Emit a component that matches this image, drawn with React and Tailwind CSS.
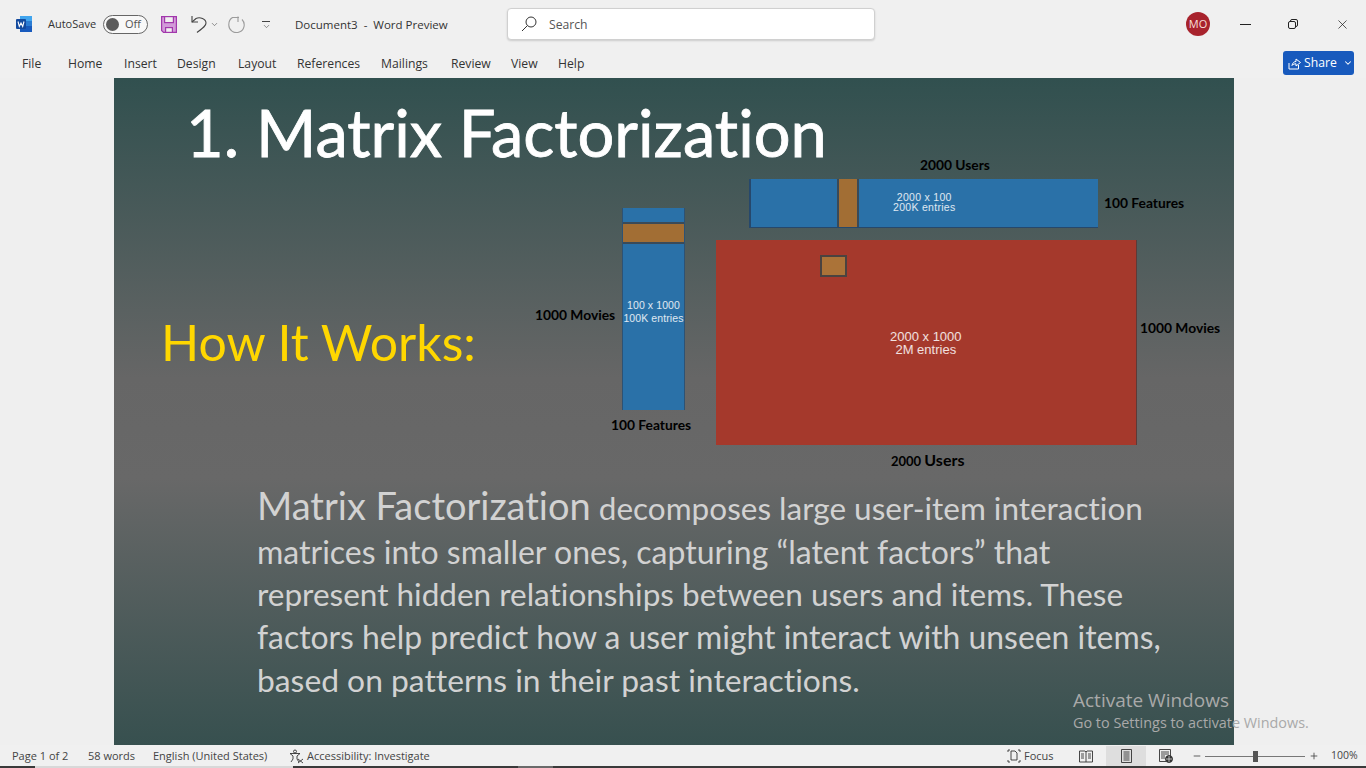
import React from 'react';
import { Minus, Plus, X, ChevronDown } from 'lucide-react';

const tabs = [
  ['File', 'w-[68px] pl-[22px]'],
  ['Home', 'w-[56px]'],
  ['Insert', 'w-[53px]'],
  ['Design', 'w-[61px]'],
  ['Layout', 'w-[59px]'],
  ['References', 'w-[84px]'],
  ['Mailings', 'w-[70px]'],
  ['Review', 'w-[60px]'],
  ['View', 'w-[47px]'],
  ['Help', 'w-[40px]'],
];

function WordLogo() {
  return (
    <svg width="16" height="16" viewBox="0 0 16 16" className="shrink-0">
      <rect x="4" y="0" width="12" height="16" rx="1" fill="#2b7cd3" />
      <rect x="4" y="0" width="12" height="5" fill="#41a5ee" />
      <rect x="4" y="10" width="12" height="6" fill="#185abd" />
      <rect x="0" y="3" width="10" height="10" rx="1" fill="#134a9e" />
      <path d="M2 5.5 L3.3 10.5 L5 7 L6.7 10.5 L8 5.5" fill="none" stroke="#fff" strokeWidth="1.1" />
    </svg>
  );
}

function SaveIcon() {
  return (
    <svg width="16" height="17" viewBox="0 0 16 17" className="shrink-0">
      <path d="M.6.6 H15.4 V16.4 H2.5 L.6 14.5 Z" fill="#d29bd9" stroke="#a238ac" strokeWidth="1.2" />
      <rect x="3.6" y=".6" width="8.8" height="6" fill="#f0f0f0" stroke="#a238ac" strokeWidth="1.2" />
      <rect x="4.6" y="11.6" width="6.8" height="4.8" fill="#f0f0f0" stroke="#a238ac" strokeWidth="1.2" />
    </svg>
  );
}

function UndoIcon() {
  return (
    <svg width="16" height="18" viewBox="0 0 16 18" fill="none" stroke="#444" strokeWidth="1.1" className="shrink-0">
      <path d="M1 1 V7 H7" />
      <path d="M1 7 L5 3.5 C9 1.5 15 4 15 8 C15 11 12 13 6 17.5" />
    </svg>
  );
}

function RedoIcon() {
  return (
    <svg width="17" height="17" viewBox="0 0 17 17" fill="none" stroke="#9c9c9c" strokeWidth="1.1" className="shrink-0">
      <path d="M11 1.5 H4.5 C2 3 .8 5.5 .8 8.5 A7.7 7.7 0 1 0 14 3.5" />
      <path d="M10 .5 V6" />
    </svg>
  );
}

function Diagram() {
  return (
    <div className="relative w-[710px] h-[312px] font-['Lato',sans-serif] font-bold text-black text-[13.8px] whitespace-nowrap">
      <span className="absolute left-[410px] -top-px leading-[16px]">2000 Users</span>
      <div className="absolute left-[239px] top-[21px] w-[349px] h-[49px] bg-[#2a71a8] border-l-2 border-b border-[#26486c]">
        <div className="absolute left-[86px] top-0 w-[22px] h-full bg-[#a26e34] border-x-2 border-[#3a4a58]" />
        <div className="absolute left-[142px] top-[13px] text-white/85 font-['Liberation_Sans',sans-serif] font-normal text-[10.5px] tracking-[0.3px] leading-[10px] text-center">2000 x 100<br />200K entries</div>
      </div>
      <span className="absolute left-[594px] top-[37px] leading-[16px]">100 Features</span>
      <div className="absolute left-[112px] top-[50px] w-[63px] h-[202px] bg-[#2a71a8] border-x border-[#2d5274]">
        <div className="absolute left-0 top-[14px] w-full h-[22px] bg-[#a26e34] border-y-2 border-[#3a4a58]" />
        <div className="absolute inset-x-0 top-[91px] text-white/85 font-['Liberation_Sans',sans-serif] font-normal text-[10.5px] tracking-[0.1px] leading-[13px] text-center">100 x 1000<br />100K entries</div>
      </div>
      <span className="absolute left-[25px] top-[149px] leading-[16px]">1000 Movies</span>
      <span className="absolute left-[101px] top-[259px] leading-[16px]">100 Features</span>
      <div className="absolute left-[206px] top-[82px] w-[421px] h-[205px] bg-[#a5392c] border-r border-[#5c3a38]">
        <div className="absolute left-[104px] top-[15px] w-[27px] h-[22px] bg-[#ab7338] border-2 border-[#4a4340]" />
        <div className="absolute left-[174px] top-[90px] text-white/85 font-['Liberation_Sans',sans-serif] font-normal text-[13px] leading-[13px] text-center">2000 x 1000<br />2M entries</div>
      </div>
      <span className="absolute left-[630px] top-[162px] leading-[16px]">1000 Movies</span>
      <span className="absolute left-[381px] top-[293px] leading-[18px] text-[13px]">2000 <span className="text-[16px]">Users</span></span>
    </div>
  );
}

export default function App() {
  return (
    <div className="w-[1366px] h-[768px] overflow-hidden flex flex-col bg-[#f0f0f0] font-['Open_Sans',sans-serif] text-[#333]">
      {/* title bar */}
      <div className="h-[48px] flex items-center shrink-0 text-[11.5px]">
        <div className="ml-[16px]"><WordLogo /></div>
        <span className="ml-[16px] w-[55px] text-[11px] text-[#333]">AutoSave</span>
        <div className="w-[45px] h-[19px] rounded-full border border-[#666] bg-[#f8f8f8] flex items-center pl-[2px] gap-[6px]">
          <div className="w-[13px] h-[13px] rounded-full bg-[#5c5c5c]" />
          <span className="text-[11px] text-[#555]">Off</span>
        </div>
        <div className="ml-[13px]"><SaveIcon /></div>
        <div className="ml-[14px]"><UndoIcon /></div>
        <ChevronDown size={9} strokeWidth={1.5} className="ml-[3px] text-[#444]" />
        <div className="ml-[9px]"><RedoIcon /></div>
        <div className="ml-[16px] w-[10px] mt-[3px] flex flex-col items-center gap-[2px]">
          <div className="w-[8px] h-px bg-[#444]" />
          <ChevronDown size={9} strokeWidth={1.5} className="text-[#444] -mt-[2px]" />
        </div>
        <span className="ml-[24px] w-[212px] pt-px text-[#333]">Document3&nbsp; -&nbsp; Word Preview</span>
        <div className="w-[368px] h-[32px] bg-white rounded-[4px] border border-[#d0d0d0] shadow-[0_1px_2px_rgba(0,0,0,0.15)] flex items-center pl-[13px] text-[12.2px] text-[#555]">
          <svg width="16" height="16" viewBox="0 0 16 16" fill="none" stroke="#333" strokeWidth="1" className="shrink-0">
            <circle cx="10" cy="6" r="5" />
            <path d="M6.4 9.6 L1 15" />
          </svg>
          <span className="ml-[12px] pt-[2px]">Search</span>
        </div>
        <div className="ml-[311px] w-[24px] h-[24px] rounded-full bg-[#a8232d] text-[#f6dfd8] text-[11px] flex items-center justify-center">MO</div>
        <div className="ml-[30px] w-[12px] flex"><div className="w-[11px] h-px bg-[#222]" /></div>
        <div className="ml-[36px] w-[12px]">
          <div className="relative w-[10px] h-[10px]">
            <div className="absolute left-[2px] top-0 w-[8px] h-[8px] border border-[#222] rounded-[2px]" />
            <div className="absolute left-0 top-[2px] w-[8px] h-[8px] border border-[#222] rounded-[2px] bg-[#f0f0f0]" />
          </div>
        </div>
        <div className="ml-[35px]"><X size={15} strokeWidth={1.1} className="text-[#111]" /></div>
      </div>
      {/* ribbon tabs */}
      <div className="h-[30px] flex items-start shrink-0 text-[12.2px] text-[#333] relative">
        {tabs.map(([t, c]) => (
          <span key={t} className={`${c} pt-[7px] leading-[18px]`}>{t}</span>
        ))}
        <div className="absolute right-[12px] top-[3px] w-[71px] h-[24px] rounded-[3px] bg-[#185abd] text-white flex items-center pl-[5px] gap-[3px]">
          <svg width="13" height="13" viewBox="0 0 13 13" fill="none" stroke="#fff" strokeWidth="1" className="shrink-0">
            <path d="M1 6 V12 H10.5 V8" />
            <path d="M4 8.5 C4.5 5.5 6.5 4.5 8 4.5 V2 L12.5 5.5 L8 9 V6.8 C6.5 6.8 5 7.2 4 8.5 Z" />
          </svg>
          <span>Share</span>
          <ChevronDown size={10} strokeWidth={2.5} className="ml-[3px]" />
        </div>
      </div>
      {/* document */}
      <div className="h-[667px] shrink-0 relative bg-[#efefef]">
        <div className="ml-[114px] w-[1120px] h-full bg-[linear-gradient(180deg,#31504f_0%,#666666_45%,#686868_60%,#37504f_100%)] font-['Lato',sans-serif] [font-variant-ligatures:none]">
          <div className="pl-[72px] pt-[16px] flex items-center text-[65px] leading-[76px] text-white [-webkit-text-stroke:0.8px_white]">
            <span className="w-[70px]">1.</span>
            <span>Matrix Factorization</span>
          </div>
          <div className="flex -mt-[12px]">
            <div className="w-[396px] shrink-0 pl-[47px] pt-[154px] text-[50px] leading-[60px] text-[#ffd700] whitespace-nowrap">How It Works:</div>
            <Diagram />
          </div>
          <div className="pl-[143px] pt-[14px] w-[1060px] text-[31.8px] leading-[43px] text-[#d2d2d2]">
            <p className="whitespace-nowrap text-[31.5px]"><span className="text-[38px]">Matrix Factorization</span> decomposes large user-item interaction</p>
            <p className="whitespace-nowrap text-[32px]">matrices into smaller ones, capturing “latent factors” that</p>
            <p className="whitespace-nowrap text-[31.5px]">represent hidden relationships between users and items. These</p>
            <p className="whitespace-nowrap text-[31.9px]">factors help predict how a user might interact with unseen items,</p>
            <p className="whitespace-nowrap">based on patterns in their past interactions.</p>
          </div>
        </div>
        {/* watermark over the page */}
        <div className="absolute left-[1073px] top-[609px] font-['Open_Sans',sans-serif] text-[#a9a9a9] whitespace-nowrap">
          <div className="text-[19px] leading-[26px]">Activate Windows</div>
          <div className="text-[14.4px] leading-[19px]">Go to Settings to activate Windows.</div>
        </div>
      </div>
      {/* status bar */}
      <div className="h-[21px] shrink-0 flex items-center pt-px text-[11px] text-[#444] bg-[#f0f0f0]">
        <span className="ml-[12px] w-[76px]">Page 1 of 2</span>
        <span className="w-[65px]">58 words</span>
        <span className="w-[136px]">English (United States)</span>
        <svg width="15" height="15" viewBox="0 0 15 15" fill="none" stroke="#333" strokeWidth=".9" className="shrink-0">
          <circle cx="6" cy="2.5" r="1.5" />
          <path d="M1 4.5 H11 L8 7 V10 L10 13 M4 7 V10 L2 13 M4 7 L1 4.5" />
          <path d="M9 10 L14 14 M14 10 L9 14" />
        </svg>
        <span className="ml-[3px]">Accessibility: Investigate</span>
        <div className="ml-auto mr-[3px] flex items-center h-full">
          <svg width="14" height="14" viewBox="0 0 14 14" fill="none" stroke="#333" strokeWidth=".9" className="shrink-0">
            <path d="M1 3 V1 H3 M11 1 H13 V3 M1 11 V13 H3 M11 13 H13 V11" />
            <path d="M4 2 H8 L10 4 V11 H4 Z" />
          </svg>
          <span className="ml-[3px] w-[55px] text-[11px]">Focus</span>
          <svg width="14" height="13" viewBox="0 0 14 13" fill="none" stroke="#333" strokeWidth=".9" className="shrink-0">
            <path d="M.5 1 H6 L7 2 L8 1 H13.5 V12 H.5 Z M7 2 V12 M2 4 H5 M2 6 H5 M2 8 H5 M9 4 H12 M9 6 H12 M9 8 H12" />
          </svg>
          <div className="ml-[13px] w-[40px] h-full bg-[#dedede] flex items-center justify-center">
            <svg width="11" height="14" viewBox="0 0 11 14" fill="none" stroke="#333" strokeWidth=".9">
              <path d="M.5 .5 H10.5 V13.5 H.5 Z M2.5 3 H8.5 M2.5 5 H8.5 M2.5 7 H8.5 M2.5 9 H8.5 M2.5 11 H8.5" />
            </svg>
          </div>
          <svg width="14" height="14" viewBox="0 0 14 14" fill="none" stroke="#333" strokeWidth=".9" className="ml-[13px] shrink-0">
            <path d="M.5 .5 H11.5 V7 M.5 .5 V12.5 H7 M2 3 H10 M2 5 H10 M2 7 H6 M2 9 H6" />
            <circle cx="10" cy="10" r="3.5" fill="#333" />
            <path d="M7 10 H13 M10 7 V13" stroke="#f0f0f0" strokeWidth=".7" />
          </svg>
          <Minus size={10} strokeWidth={2} className="ml-[19px] text-[#444]" />
          <div className="ml-[3px] relative w-[100px] h-px bg-[#777]">
            <div className="absolute left-[48px] -top-[5px] w-[5px] h-[11px] bg-[#555]" />
          </div>
          <Plus size={10} strokeWidth={2} className="ml-[4px] text-[#444]" />
          <span className="ml-[12px] w-[32px] text-[10.5px]">100%</span>
        </div>
      </div>
      {/* strip of the window behind */}
      <div className="h-[2px] shrink-0 flex bg-[#3a3a3a]">
        <div className="ml-[35px] w-[258px] bg-[#d8d8d8]" />
        <div className="ml-[225px] w-[35px] bg-[#6a6a6a]" />
      </div>
    </div>
  );
}
